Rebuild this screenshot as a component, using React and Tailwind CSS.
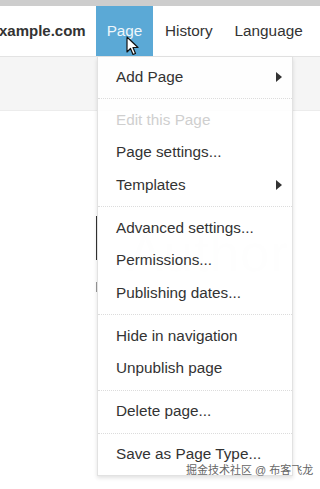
import React from 'react';

const font = { fontFamily: '"Liberation Sans", Arial, sans-serif' };

const Arrow = () => (
  <svg width="6" height="10" viewBox="0 0 6 10" className="ml-auto mr-[10px]">
    <path d="M0 0 L6 5 L0 10 Z" fill="#333" />
  </svg>
);

const Cursor = () => (
  <svg width="14" height="20" viewBox="0 0 14 20" className="absolute left-[126px] top-[36px]">
    <path
      d="M1 1 L1 16 L4.5 12.5 L7 18.5 L9.5 17.5 L7 11.5 L12 11.5 Z"
      fill="#fff"
      stroke="#111"
      strokeWidth="1.2"
      strokeLinejoin="round"
    />
  </svg>
);

const Item = ({ label, disabled, sub }) => (
  <div
    className={`flex items-center h-[32.5px] pl-[18px] text-[15.3px] ${
      disabled ? 'text-[#cfcfcf]' : 'text-[#333]'
    }`}
  >
    <span>{label}</span>
    {sub && <Arrow />}
  </div>
);

const Sep = () => (
  <div className="h-[10.5px] flex items-center">
    <div className="w-full border-t border-dotted border-[#dcdcdc]" />
  </div>
);

const App = () => {
  return (
    <div className="relative w-[320px] h-[489px] bg-white overflow-hidden" style={font}>
      {/* top strip */}
      <div className="h-[6px] bg-[#cdcdcd]" />

      {/* toolbar */}
      <div className="flex items-stretch h-[51px] border-b border-[#e3e3e3] bg-white">
        <div className="flex items-center font-bold text-[15px] text-[#333] -ml-px w-[97px]">
          xample.com
        </div>
        <div className="flex items-center justify-center w-[57px] bg-[#5ba9d6] text-[15.3px] text-[#eef6fb]">
          Page
        </div>
        <div className="flex items-center pl-[12px] text-[15.3px] text-[#333]">History</div>
        <div className="flex items-center pl-[22px] text-[15.3px] text-[#333]">Language</div>
      </div>

      {/* gray band under toolbar */}
      <div className="h-[54px] bg-[#f5f5f5] border-b border-[#ececec]" />

      {/* background content */}
      <div className="absolute left-[96px] top-[216px] w-[2px] h-[44px] bg-[#333]" />
      <div className="absolute left-[96px] top-[282px] w-[2px] h-[10px] bg-[#999]" />
      <div className="absolute left-[128px] top-[214px] text-[52px] text-[#f4f4f4] tracking-wide">
        Author
      </div>

      <Cursor />

      {/* dropdown menu */}
      <div className="absolute left-[97px] top-[57px] w-[196px] py-[4px] bg-white/90 border border-[#e2e2e2] border-t-0 shadow-[0_2px_4px_rgba(0,0,0,0.12)]">
        <Item label="Add Page" sub />
        <Sep />
        <Item label="Edit this Page" disabled />
        <Item label="Page settings..." />
        <Item label="Templates" sub />
        <Sep />
        <Item label="Advanced settings..." />
        <Item label="Permissions..." />
        <Item label="Publishing dates..." />
        <Sep />
        <Item label="Hide in navigation" />
        <Item label="Unpublish page" />
        <Sep />
        <Item label="Delete page..." />
        <Sep />
        <Item label="Save as Page Type..." />
      </div>

      {/* watermark */}
      <div
        className="absolute left-[186px] top-[463px] whitespace-nowrap text-[11px] leading-[14px] text-[#666]"
        style={{ fontFamily: '"Liberation Sans", "Noto Sans CJK SC", sans-serif' }}
      >
        掘金技术社区 @ 布客飞龙
      </div>
    </div>
  );
};

export default App;
